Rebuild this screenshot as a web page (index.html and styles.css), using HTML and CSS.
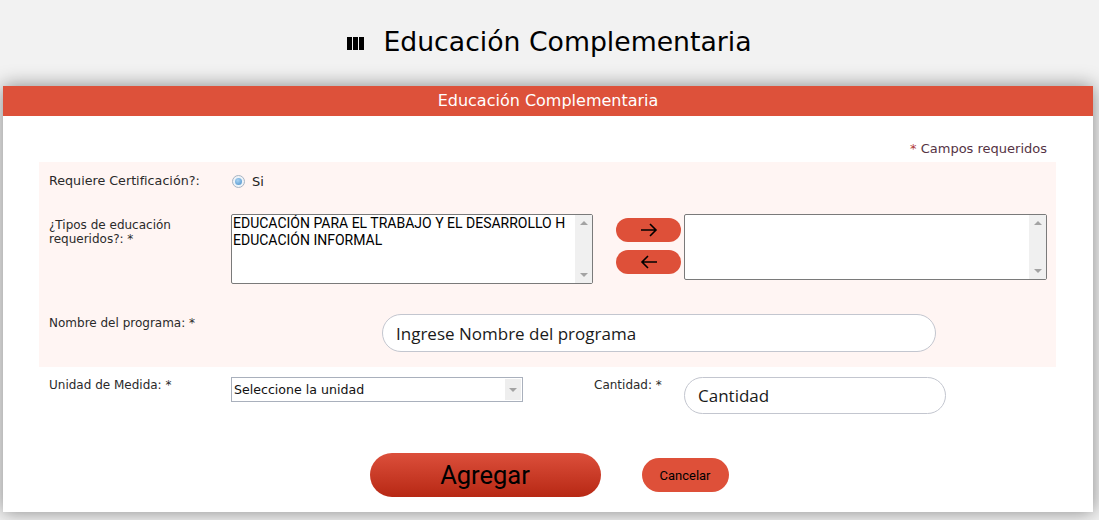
FILE: index.html
```html
<!DOCTYPE html>
<html lang="es">
<head>
<meta charset="utf-8">
<title>Educación Complementaria</title>
<link rel="stylesheet" href="styles.css">
</head>
<body>
<header class="page-head">
  <svg class="head-icon" width="18" height="13" viewBox="0 0 18 13" aria-hidden="true">
    <rect x="0" y="0" width="5" height="13" fill="#000"/>
    <rect x="6" y="0" width="5" height="13" fill="#000"/>
    <rect x="12" y="0" width="5" height="13" fill="#000"/>
  </svg>
  <h1 class="page-title">Educación Complementaria</h1>
</header>

<section class="card">
  <div class="card-head">Educación Complementaria</div>
  <div class="card-body">
    <div class="req-note"><span class="req-star">*</span> Campos requeridos</div>

    <div class="pink">
      <div class="row row-cert">
        <div class="label">Requiere Certificación?:</div>
        <div class="radio-wrap"><span class="radio"><span class="radio-dot"></span></span><span class="radio-text">Si</span></div>
      </div>

      <div class="row row-types">
        <div class="label label-types">¿Tipos de educación requeridos?: *</div>
        <div class="listbox list-left">
          <div class="list-items">
            <div class="list-item">EDUCACIÓN PARA EL TRABAJO Y EL DESARROLLO H</div>
            <div class="list-item">EDUCACIÓN INFORMAL</div>
          </div>
          <div class="scrollbar"><span class="arrow-up"></span><span class="arrow-down"></span></div>
        </div>
        <div class="move-btns">
          <button class="move-btn" type="button" aria-label="Agregar a la lista">
            <svg width="18" height="14" viewBox="0 0 18 14" aria-hidden="true"><path d="M1 7 H16 M10 1 L16 7 L10 13" fill="none" stroke="#000" stroke-width="1.6"/></svg>
          </button>
          <button class="move-btn" type="button" aria-label="Quitar de la lista">
            <svg width="18" height="14" viewBox="0 0 18 14" aria-hidden="true"><path d="M17 7 H2 M8 1 L2 7 L8 13" fill="none" stroke="#000" stroke-width="1.6"/></svg>
          </button>
        </div>
        <div class="listbox list-right">
          <div class="list-items"></div>
          <div class="scrollbar"><span class="arrow-up"></span><span class="arrow-down"></span></div>
        </div>
      </div>

      <div class="row row-name">
        <div class="label label-name">Nombre del programa: *</div>
        <div class="pill-input name-input">Ingrese Nombre del programa</div>
      </div>
    </div>

    <div class="row row-unit">
      <div class="label label-unit">Unidad de Medida: *</div>
      <div class="select">
        <span class="select-text">Seleccione la unidad</span>
        <span class="select-arrow"><span class="arrow-down"></span></span>
      </div>
      <div class="label label-qty">Cantidad: *</div>
      <div class="pill-input qty-input">Cantidad</div>
    </div>

    <div class="actions">
      <button class="btn-add" type="button">Agregar</button>
      <button class="btn-cancel" type="button">Cancelar</button>
    </div>
  </div>
</section>
</body>
</html>
```

FILE: styles.css
```css
html, body {
  margin: 0;
  padding: 0;
  background: #f2f2f2;
  height: 520px;
  overflow: hidden;
}
body {
  font-family: "DejaVu Sans", Verdana, sans-serif;
  color: #222;
}
.page-head {
  display: flex;
  justify-content: center;
  align-items: center;
  gap: 18px;
  height: 58px;
  padding-top: 26px;
  box-sizing: border-box;
}
.head-icon {
  display: block;
  margin-top: 2px;
}
.page-title {
  margin: 0;
  font-weight: normal;
  font-size: 26.7px;
  line-height: 32px;
  color: #000;
}
.card {
  margin: 28px 6px 0 3px;
  background: #fff;
  box-shadow: 0 0 18px rgba(0, 0, 0, 0.45);
  height: 426px;
}
.card-head {
  height: 30px;
  line-height: 30px;
  background: #dd513a;
  color: #fff;
  text-align: center;
  font-size: 16px;
}
.card-body {
  padding: 0 0 15px 0;
}
.req-note {
  text-align: right;
  margin: 24px 46px 4px 0;
  line-height: 18px;
  font-size: 13px;
  color: #553344;
}
.req-star {
  color: #b03a3a;
}
.pink {
  margin: 0 37px 0 36px;
  background: #fff5f3;
  padding: 11px 0 15px 10px;
}
.row {
  display: flex;
  align-items: flex-start;
}
.label {
  font-size: 12px;
  line-height: 14px;
  color: #2a2a2a;
  width: 182px;
  flex: none;
}
.row-cert .label {
  line-height: 16px;
  font-size: 12.7px;
}
.radio-wrap {
  display: flex;
  align-items: center;
  gap: 7px;
  height: 16px;
  margin-left: 1px;
}
.radio {
  width: 11px;
  height: 11px;
  border-radius: 50%;
  border: 1px solid #a8b4c2;
  background: #eef3f8;
  display: flex;
  align-items: center;
  justify-content: center;
}
.radio-dot {
  width: 7px;
  height: 7px;
  border-radius: 50%;
  background: radial-gradient(circle at 40% 35%, #a9d3f3, #4a8fc9);
}
.radio-text {
  font-size: 13px;
  color: #222;
}
.row-types {
  margin-top: 25px;
}
.label-types {
  padding-top: 4px;
}
.listbox {
  display: flex;
  border: 1px solid #7a7a7a;
  border-radius: 2px;
  background: #fff;
  box-sizing: border-box;
  flex: none;
}
.list-left {
  width: 362px;
  height: 70px;
}
.list-right {
  width: 363px;
  height: 66px;
  margin-left: 3px;
}
.list-items {
  flex: 1;
  min-width: 0;
  overflow: hidden;
  padding: 0 0 0 1px;
  font-family: Roboto, "Liberation Sans", Arial, sans-serif;
  font-size: 14px;
  line-height: 17px;
  color: #000;
}
.list-item {
  white-space: nowrap;
}
.scrollbar {
  width: 17px;
  flex: none;
  background: #f0f0f0;
  display: flex;
  flex-direction: column;
  justify-content: space-between;
  align-items: center;
  padding: 6px 0 6px;
  box-sizing: border-box;
}
.arrow-up {
  width: 0;
  height: 0;
  border-left: 4px solid transparent;
  border-right: 4px solid transparent;
  border-bottom: 4px solid #a3a3a3;
}
.arrow-down {
  width: 0;
  height: 0;
  border-left: 4px solid transparent;
  border-right: 4px solid transparent;
  border-top: 4px solid #a3a3a3;
}
.move-btns {
  display: flex;
  flex-direction: column;
  gap: 8px;
  margin-left: 23px;
  padding-top: 4px;
}
.move-btn {
  width: 65px;
  height: 24px;
  border: none;
  border-radius: 12px;
  background: #de5039;
  padding: 0;
  display: flex;
  align-items: center;
  justify-content: center;
}
.move-btn svg {
  display: block;
}
.row-name {
  margin-top: 30px;
}
.label-name {
  padding-top: 2px;
  width: 333px;
}
.pill-input {
  box-sizing: border-box;
  border: 1px solid #c3c6cf;
  border-radius: 19px;
  background: #fff;
  font-family: "Open Sans", "Noto Sans", sans-serif;
  font-size: 17px;
  color: #1a1a1a;
  padding-left: 13px;
  display: flex;
  align-items: center;
}
.name-input {
  width: 554px;
  height: 38px;
}
.row-unit {
  margin: 10px 0 0 46px;
}
.label-unit {
  padding-top: 1px;
}
.select {
  width: 292px;
  height: 25px;
  box-sizing: border-box;
  border: 1px solid #a9b0bc;
  background: #fff;
  display: flex;
  align-items: center;
  justify-content: space-between;
  padding: 0 1px 0 2px;
  flex: none;
}
.select-text {
  font-size: 12.6px;
  color: #111;
}
.select-arrow {
  width: 16px;
  height: 21px;
  background: #eeeeee;
  display: flex;
  align-items: center;
  justify-content: center;
}
.label-qty {
  margin-left: 71px;
  width: 90px;
  padding-top: 1px;
}
.qty-input {
  width: 262px;
  height: 37px;
}
.actions {
  display: flex;
  justify-content: center;
  align-items: center;
  gap: 41px;
  margin-top: 39px;
  padding-left: 2px;
}
.btn-add {
  width: 231px;
  height: 44px;
  border: none;
  border-radius: 22px;
  background: linear-gradient(to bottom, #dc4f3b, #b72814);
  font-family: Roboto, "Liberation Sans", sans-serif;
  font-size: 25.5px;
  color: #000;
  padding: 0;
}
.btn-cancel {
  width: 87px;
  height: 34px;
  border: none;
  border-radius: 17px;
  background: #de5039;
  font-family: Roboto, "Liberation Sans", sans-serif;
  font-size: 13px;
  color: #000;
  padding: 0;
}
```
